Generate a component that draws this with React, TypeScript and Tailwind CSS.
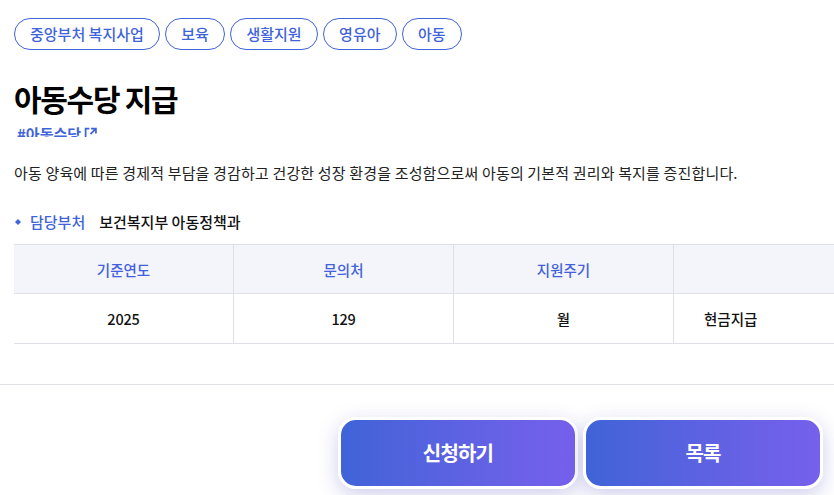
const font = { fontFamily: '"Noto Sans CJK KR", "Noto Sans", sans-serif' };

const tags = ["중앙부처 복지사업", "보육", "생활지원", "영유아", "아동"];
const heads = ["기준연도", "문의처", "지원주기", ""];

export default function App() {
  return (
    <div style={font} className="relative h-[495px] w-[834px] overflow-hidden bg-white text-[#111]">
      <div className="pl-[14px]">
        <div className="flex gap-[5.5px] pt-[18px]">
          {tags.map((t) => (
            <span
              key={t}
              className="flex h-[32px] items-center rounded-full border border-[#3f63d8] px-[15px] text-[15px] font-medium text-[#3f63d8]"
            >
              {t}
            </span>
          ))}
        </div>

        <h1 className="mt-[28px] text-[30px] leading-[40px] font-bold tracking-[-1.3px] text-black">아동수당 지급</h1>

        <div className="mt-[6px] flex h-[13px] items-start overflow-hidden pl-[3px]">
          <a className="flex items-center gap-[3px] text-[15px] leading-[19px] font-bold text-[#3f63d8]">
            #아동수당
            <svg width="13" height="13" viewBox="0 0 12 12" fill="none" stroke="currentColor" strokeWidth="1.6" className="mt-[-1px]">
              <path d="M5 1.5H1.5V12" />
              <path d="M6 6.5 10.5 2M6.5 1.5h4.5V6" />
            </svg>
          </a>
        </div>

        <p className="mt-[25px] text-[15px] leading-[22px] tracking-[0.16px] text-[#222]">
          아동 양육에 따른 경제적 부담을 경감하고 건강한 성장 환경을 조성함으로써 아동의 기본적 권리와 복지를 증진합니다.
        </p>

        <div className="mt-[26px] flex h-[24px] items-center text-[15px] font-medium">
          <svg width="6" height="6" viewBox="0 0 6 6" className="mr-[9px] ml-[1px] text-[#3f63d8]" fill="currentColor">
            <path d="M3 0 6 3 3 6 0 3Z" />
          </svg>
          <span className="text-[#3f63d8]">담당부처</span>
          <span className="ml-[14px] text-[#111]">보건복지부 아동정책과</span>
        </div>

        <div className="mt-[10px] grid w-[880px] grid-cols-[220px_220px_220px_220px] border-y border-[#dfe0e5]">
          {heads.map((h, i) => (
            <div
              key={i}
              className={`flex h-[49px] items-center justify-center border-b border-[#dfe0e5] bg-[#f4f5fa] pt-[1px] text-[14.5px] font-medium text-[#4361dc] ${i < 3 ? "border-r" : ""}`}
            >
              {h}
            </div>
          ))}
          <div className="flex h-[49px] items-center justify-center border-r border-[#dfe0e5] pt-[1px] text-[14.5px] font-medium tracking-[-0.2px]">2025</div>
          <div className="flex h-[49px] items-center justify-center border-r border-[#dfe0e5] pt-[1px] text-[14.5px] font-medium tracking-[-0.2px]">129</div>
          <div className="flex h-[49px] items-center justify-center border-r border-[#dfe0e5] pt-[1px] text-[14.5px] font-medium">월</div>
          <div className="flex h-[49px] items-center pt-[1px] pl-[30px] text-[14.5px] font-medium">현금지급</div>
        </div>
      </div>

      <div className="mt-[40px] border-t border-[#e2e2e6]" />

      <div className="mt-[32px] flex justify-end gap-[5px] pr-[11px]">
        {["신청하기", "목록"].map((b) => (
          <button
            key={b}
            type="button"
            className="flex h-[72px] w-[240px] items-center justify-center rounded-[18px] border-[3px] border-white bg-gradient-to-r from-[#3f63d8] to-[#7660ec] text-[20px] font-bold tracking-[-0.8px] text-white shadow-[0_6px_20px_rgba(80,80,190,0.28)]"
          >
            {b}
          </button>
        ))}
      </div>
    </div>
  );
}
